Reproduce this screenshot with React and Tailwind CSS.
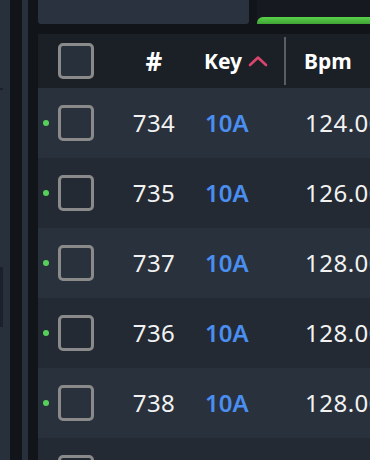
export default function App() {
  const rows = [
    { n: "734", k: "10A", b: "124.00" },
    { n: "735", k: "10A", b: "126.00" },
    { n: "737", k: "10A", b: "128.00" },
    { n: "736", k: "10A", b: "128.00" },
    { n: "738", k: "10A", b: "128.00" },
    { n: "", k: "", b: "" },
  ];
  const font = { fontFamily: '"Noto Sans", "Open Sans", sans-serif' };
  return (
    <div className="w-[370px] h-[460px] flex overflow-hidden bg-[#111419]" style={font}>
      {/* left strips */}
      <div className="w-[10px] h-full bg-[#28303c] flex flex-col shrink-0">
        <div className="h-[88px]" />
        <div className="h-[2px] w-[3px] bg-[#1c222b]" />
        <div className="h-[177px]" />
        <div className="h-[60px] w-[3px] bg-[#1c222b]" />
      </div>
      <div className="w-[12px] h-full bg-[#111419] shrink-0" />
      <div className="w-[6px] h-full bg-[#28303c] shrink-0" />
      <div className="w-[10px] h-full bg-[#111419] shrink-0" />

      {/* main */}
      <div className="flex-1 flex flex-col min-w-0 overflow-hidden">
        <div className="h-[24px] flex shrink-0">
          <div className="w-[211px] h-full bg-[#2a3240] rounded-b-[3px] shrink-0" />
          <div className="w-[8px] shrink-0" />
          <div className="flex-1 h-full bg-[#161a20] flex flex-col justify-end">
            <div className="h-[7px] bg-gradient-to-b from-[#5ad24a] to-[#3fa334] rounded-tl-[6px]" />
          </div>
        </div>
        <div className="h-[10px] shrink-0" />

        {/* header */}
        <div className="h-[54px] bg-[#1b1f26] flex items-center shrink-0 text-white">
          <div className="w-[20px] shrink-0" />
          <div className="w-[36px] h-[36px] border-[3px] border-[#8a8a8a] rounded-[5px] bg-[#28303c] shrink-0" />
          <div className="ml-[20px] w-[80px] shrink-0 text-center text-[26px] font-bold leading-none">#</div>
          <div className="w-[90px] shrink-0 pl-[10px] flex items-center h-full">
            <span className="text-[21px] font-bold leading-none">Key</span>
            <svg width="20" height="12" viewBox="0 0 20 12" className="ml-[6px]">
              <polyline points="2,10 10,2.5 18,10" fill="none" stroke="#d9456d" strokeWidth="2.6" strokeLinecap="round" strokeLinejoin="round" />
            </svg>
          </div>
          <div className="w-[2px] h-[48px] bg-[#5a5e64] shrink-0" />
          <div className="pl-[18px] shrink-0 text-[21px] font-bold leading-none">Bpm</div>
        </div>

        {/* rows */}
        {rows.map((r, i) => (
          <div
            key={i}
            className={
              "h-[70px] flex items-center shrink-0 text-[#f2f2f2] " +
              (i % 2 === 0 ? "bg-[#29313d]" : "bg-[#242a33]")
            }
          >
            <div className="w-[5px] shrink-0" />
            <div className="w-[6px] h-[6px] rounded-full bg-[#55d15a] shrink-0" />
            <div className="w-[9px] shrink-0" />
            <div className="w-[36px] h-[36px] border-[3px] border-[#8a8a8a] rounded-[5px] shrink-0" />
            <div className="ml-[20px] w-[80px] shrink-0 text-center text-[24px] leading-none tracking-[0.5px]">{r.n}</div>
            <div className="w-[92px] shrink-0 pl-[11px] text-[24px] font-semibold leading-none text-[#4a8ef0]">{r.k}</div>
            <div className="pl-[19px] shrink-0 text-[24px] leading-none whitespace-nowrap tracking-[0.5px]">{r.b}</div>
          </div>
        ))}
      </div>
    </div>
  );
}
